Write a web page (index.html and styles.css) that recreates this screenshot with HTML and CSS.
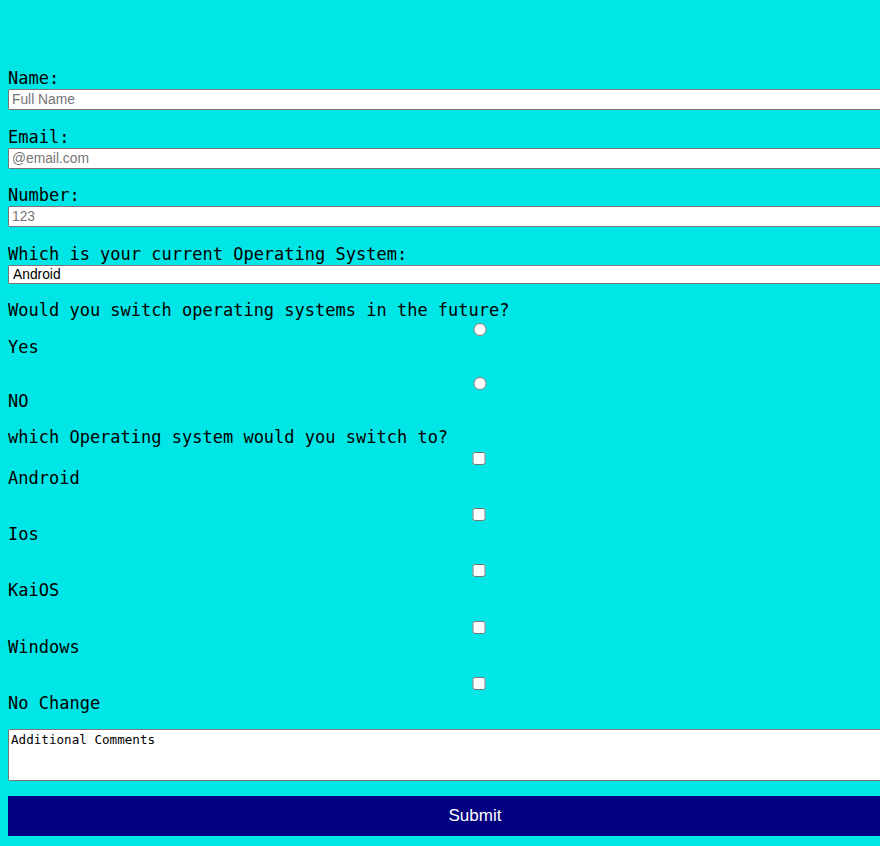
FILE: index.html
```html
<!DOCTYPE html>
<html lang="en">
<head>
<meta charset="utf-8">
<title>Survey Form</title>
<link rel="stylesheet" href="styles.css">
</head>
<body>
<div class="page">
<form class="survey">
  <label class="lbl" for="name">Name:</label>
  <input class="field" id="name" type="text" placeholder="Full Name">
  <label class="lbl" for="email">Email:</label>
  <input class="field" id="email" type="email" placeholder="@email.com">
  <label class="lbl" for="number">Number:</label>
  <input class="field" id="number" type="number" placeholder="123">
  <label class="lbl" for="os">Which is your current Operating System:</label>
  <select class="dropdown" id="os">
    <option>Android</option>
    <option>Ios</option>
    <option>KaiOS</option>
    <option>Windows</option>
  </select>

  <p class="q">Would you switch operating systems in the future?</p>
  <input class="radio first" type="radio" name="switch" id="yes">
  <label class="opt radio-lbl" for="yes">Yes</label>
  <input class="radio" type="radio" name="switch" id="no">
  <label class="opt radio-lbl" for="no">NO</label>

  <p class="q q2">which Operating system would you switch to?</p>
  <input class="check first" type="checkbox" id="c1">
  <label class="opt" for="c1">Android</label>
  <input class="check" type="checkbox" id="c2">
  <label class="opt" for="c2">Ios</label>
  <input class="check" type="checkbox" id="c3">
  <label class="opt" for="c3">KaiOS</label>
  <input class="check" type="checkbox" id="c4">
  <label class="opt" for="c4">Windows</label>
  <input class="check" type="checkbox" id="c5">
  <label class="opt" for="c5">No Change</label>

  <textarea class="comments">Additional Comments</textarea>
  <button class="submit" type="submit">Submit</button>
</form>
</div>
</body>
</html>
```

FILE: styles.css
```css
body {
  margin: 0;
  background: #00e6e6;
  font-family: "DejaVu Sans Mono", monospace;
  font-size: 17px;
  color: #000;
}

.page {
  overflow: hidden;
  padding: 8px;
  height: 830px;
}

.survey {
  width: 934px;
  padding-top: 60px;
}

.lbl {
  display: block;
  line-height: 20px;
  margin-bottom: 1px;
}

.field {
  display: block;
  box-sizing: border-box;
  width: 934px;
  height: 21px;
  margin: 0 0 16.5px;
  font-family: "Liberation Sans", Arial, sans-serif;
  font-size: 13.8px;
}

.dropdown {
  display: block;
  box-sizing: border-box;
  width: 934px;
  height: 19px;
  margin: 0 0 16px;
  font-family: "Liberation Sans", Arial, sans-serif;
  font-size: 13.8px;
}

.q {
  margin: 0;
  line-height: 20px;
}

.q2 {
  margin-top: 16.5px;
}

.radio {
  display: block;
  width: 934px;
  height: 13px;
  margin: 19.5px 3px 0 5px;
}

.radio.first {
  margin-top: 3.5px;
}

.check {
  display: block;
  width: 934px;
  height: 13px;
  margin: 20.4px 3px 0 4px;
}

.check.first {
  margin-top: 4.5px;
}

.opt {
  display: block;
  line-height: 20px;
  margin-top: 3px;
}

.radio-lbl {
  margin-top: 1px;
}

.comments {
  display: block;
  box-sizing: border-box;
  width: 934px;
  height: 52px;
  margin: 15.5px 0 0;
  font-family: "DejaVu Sans Mono", monospace;
  font-size: 12.6px;
  resize: none;
}

.submit {
  display: block;
  width: 934px;
  height: 40px;
  margin: 15px 0 0;
  border: none;
  background: #000080;
  color: #fff;
  font-family: "Liberation Sans", Arial, sans-serif;
  font-size: 17px;
}
```
